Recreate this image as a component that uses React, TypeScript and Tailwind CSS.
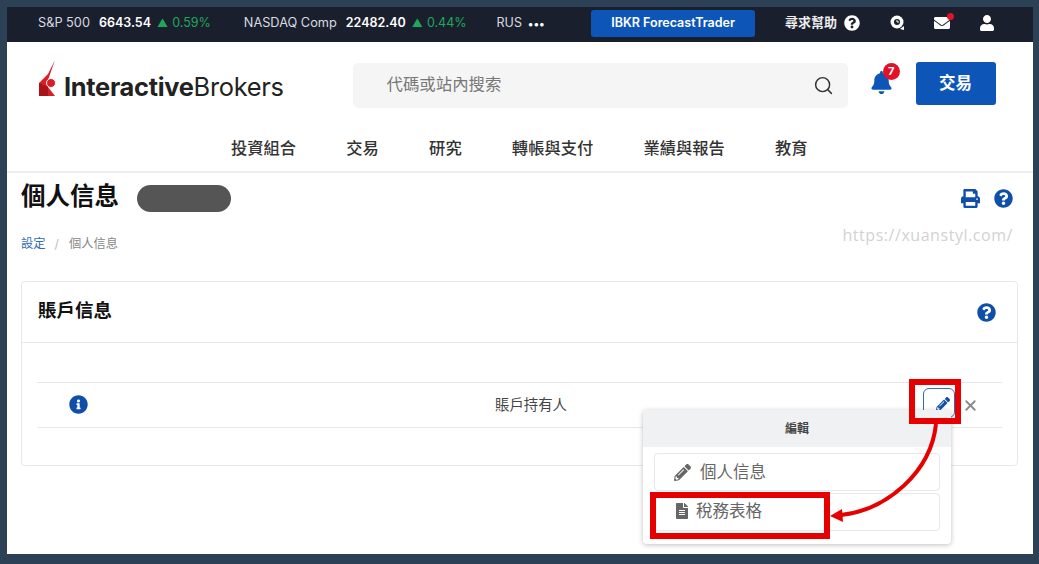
import { FaBell, FaEnvelope, FaFileAlt, FaInfoCircle, FaPencilAlt, FaPrint, FaQuestionCircle, FaUser } from "react-icons/fa"
import { Search, X } from "lucide-react"

const tickers = [
  { name: "S&P 500", value: "6643.54", change: "0.59%" },
  { name: "NASDAQ Comp", value: "22482.40", change: "0.44%" },
]

const navItems = ["投資組合", "交易", "研究", "轉帳與支付", "業績與報告", "教育"]

function Logo() {
  return (
    <div className="flex items-end gap-[6px] h-[38px]">
      <svg width="20" height="38" viewBox="0 0 20 38" className="shrink-0">
        <path d="M17 0 L10 14 L1 23 L1 36 L17 36 L10 27 L10 20 Z" fill="#d81f26" />
        <path d="M1 23 L1 36 L10 36 L10 27 Z" fill="#a9141c" />
        <circle cx="13" cy="23" r="4.5" fill="#d81f26" stroke="#fff" strokeWidth="1" />
      </svg>
      <div className="text-[25.4px] leading-[22px] text-[#222] tracking-[-0.3px] whitespace-nowrap font-['Inter',sans-serif]">
        <span className="font-bold">Interactive</span>
        <span>Brokers</span>
      </div>
    </div>
  )
}

function ChatClock() {
  return (
    <svg width="16" height="16" viewBox="0 0 16 16">
      <circle cx="7" cy="7" r="6.5" fill="#fff" />
      <circle cx="7" cy="7" r="3" fill="#1a1f2e" />
      <path d="M7 5v2h2" stroke="#fff" strokeWidth="1" fill="none" />
      <path d="M10 14l4-3v4z" fill="#fff" />
    </svg>
  )
}

function TopBar() {
  return (
    <div className="flex items-center h-[35px] bg-[#1a1f2e] text-white shrink-0 pl-[31px] pb-[3px] text-[12.75px] whitespace-nowrap">
      <div className="flex items-center gap-[33px]">
        {tickers.map((t) => (
          <div key={t.name} className="flex items-center">
            <span className="text-[#d8dbe0]">{t.name}</span>
            <span className="ml-[9px] text-[12.5px] font-semibold">{t.value}</span>
            <span className="ml-[6px] text-[11px] text-[#1fa85a]">▲</span>
            <span className="ml-[4px] text-[12.5px] text-[#1fa85a]">{t.change}</span>
          </div>
        ))}
        <span className="-ml-[3px] text-[12.5px] text-[#d8dbe0]">RUS</span>
      </div>
      <span className="ml-[6px] mt-[3px] font-bold tracking-[0.5px] text-[11px] leading-none">•••</span>
      <button className="ml-[46px] w-[164px] h-[27px] rounded-[3px] bg-[#0d56b8] font-semibold text-[12.5px]">IBKR ForecastTrader</button>
      <span className="ml-[30px] font-semibold text-[13px] text-[#eee]">尋求幫助</span>
      <FaQuestionCircle className="ml-[7px] text-white" size={16} />
      <span className="ml-[30px]"><ChatClock /></span>
      <span className="relative ml-[28px]">
        <FaEnvelope size={16} className="text-white" />
        <span className="absolute -top-[2px] -right-[4px] w-[7px] h-[7px] rounded-full bg-[#e0122a]" />
      </span>
      <FaUser size={16} className="ml-[29px] text-white" />
    </div>
  )
}

function Header() {
  return (
    <header className="h-[131px] shrink-0 border-b-2 border-[#eeeeee] bg-white">
      <div className="flex items-start pl-[31px] pt-[18px]">
        <Logo />
        <div className="ml-[69px] mt-[3px] flex items-center justify-between w-[495px] h-[45px] rounded-[5px] bg-[#f5f5f5] pl-[34px] pr-[14px] text-[16.4px] text-[#777]">
          <span className="pb-[3px]">代碼或站內搜索</span>
          <Search size={21} className="text-[#333]" strokeWidth={1.7} />
        </div>
        <div className="relative ml-[22px] mt-[11px]">
          <FaBell size={23} className="text-[#0d56b8]" />
          <span className="absolute -top-[8px] left-[13px] flex items-center justify-center w-[17px] h-[17px] rounded-full bg-[#e0122a] text-white text-[11px] font-bold">7</span>
        </div>
        <button className="ml-[23px] mt-[2px] w-[80px] h-[43px] rounded-[3px] bg-[#0d56b8] text-white text-[16.5px] font-semibold">交易</button>
      </div>
      <nav className="flex gap-[50.2px] pl-[224px] mt-[28px] text-[16.3px] font-medium text-[#333]">
        {navItems.map((n) => (
          <span key={n}>{n}</span>
        ))}
      </nav>
    </header>
  )
}

function Dropdown() {
  return (
    <div className="absolute left-[636px] top-[403px] w-[308px] h-[134px] rounded-[4px] bg-white shadow-[0_1px_5px_rgba(0,0,0,0.25)]">
      <div className="flex items-center justify-center h-[37px] bg-[#f0f1f2] text-[12px] font-bold text-[#444]">編輯</div>
      <div className="flex flex-col gap-[2px] px-[11px] pt-[6px]">
        <div className="flex items-center h-[38px] pl-[19px] border border-[#e8e8e8] rounded-[4px] text-[16.5px] text-[#666]">
          <FaPencilAlt size={17} className="text-[#666]" />
          <span className="ml-[9px]">個人信息</span>
        </div>
        <div className="flex items-center h-[38px] pl-[19px] border border-[#e8e8e8] rounded-[4px] text-[16.5px] text-[#666]">
          <FaFileAlt size={16} className="text-[#666] -mt-[3px]" />
          <span className="ml-[6px] -mt-[2px]">稅務表格</span>
        </div>
      </div>
    </div>
  )
}

function Annotations() {
  return (
    <>
      <div className="absolute left-[902px] top-[372px] w-[52px] h-[45px] border-[6px] border-[#e60000]" />
      <div className="absolute left-[643px] top-[485px] w-[180px] h-[47px] border-[6px] border-[#e60000]" />
      <svg className="absolute left-[820px] top-[415px]" width="120" height="100" viewBox="0 0 120 100">
        <path d="M109 2 C104 50 60 88 14 93" fill="none" stroke="#e60000" strokeWidth="4" />
        <path d="M3 94 L15 87 L16 100 Z" fill="#e60000" />
      </svg>
    </>
  )
}

export default function App() {
  return (
    <div className="w-[1039px] h-[564px] bg-[#2d4156] pl-[7px] pr-[6px] pt-[7px] pb-[10px] font-['Inter','Noto_Sans_CJK_TC',sans-serif]">
      <div className="relative flex flex-col h-full bg-white overflow-hidden">
        <TopBar />
        <Header />
        <main className="px-[14px]">
          <div className="flex items-center h-[46px] mt-[2px]">
            <h1 className="text-[24.5px] font-bold text-[#111] -mt-[3px]">個人信息</h1>
            <span className="ml-[18px] w-[94px] h-[27px] rounded-full bg-[#555555]" />
            <FaPrint size={19} className="ml-auto text-[#0f4fa8]" />
            <FaQuestionCircle size={19} className="ml-[14px] mr-[6px] text-[#0f4fa8]" />
          </div>
          <div className="flex items-center justify-between h-[26px] mt-[10px] text-[12.25px]">
            <div className="flex items-center">
              <span className="text-[#2f6db5]">設定</span>
              <span className="ml-[9px] mr-[10px] text-[#bbb]">/</span>
              <span className="text-[#888]">個人信息</span>
            </div>
            <span className="mr-[6px] -mt-[19px] text-[16px] tracking-[0.55px] text-[#d2d2d2] font-['Open_Sans',sans-serif]">https://xuanstyl.com/</span>
          </div>
          <section className="mt-[24px] w-[997px] h-[185px] border border-[#e8e8e8] rounded-[4px]">
            <div className="flex items-center justify-between h-[61px] pl-[16px] pr-[21px] border-b border-[#e8e8e8]">
              <h2 className="text-[18.5px] font-bold text-[#111] -mt-[2px]">賬戶信息</h2>
              <FaQuestionCircle size={19} className="mt-[1px] text-[#0f4fa8]" />
            </div>
            <div className="flex items-center h-[46px] mt-[39px] mx-[15px] pl-[32px] pr-[23px] border-y border-[#e8e8e8]">
              <FaInfoCircle size={19} className="-mt-[2px] text-[#0f4fa8]" />
              <span className="ml-[407px] text-[14.4px] text-[#444]">賬戶持有人</span>
              <span className="ml-auto self-start mt-[5px] flex items-center justify-end pr-[4px] w-[32px] h-[30px] rounded-[6px] border border-[#2f6db5] bg-white">
                <FaPencilAlt size={14} className="mt-[2px] text-[#0f4fa8]" />
              </span>
              <X size={17} className="ml-[7px] text-[#888]" strokeWidth={2.5} />
            </div>
          </section>
        </main>
        <Dropdown />
        <Annotations />
      </div>
    </div>
  )
}
